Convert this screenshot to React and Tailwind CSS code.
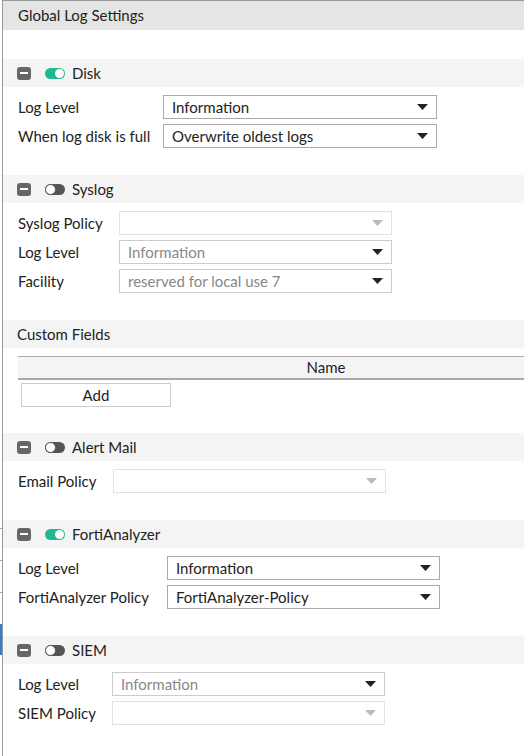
import React from "react";

const Arrow = ({ color }) => (
  <svg width="11" height="6" viewBox="0 0 11 6" className="shrink-0">
    <path d="M0 0H11L5.5 6Z" fill={color} />
  </svg>
);

const Select = ({ value, width = "w-[273px]", state = "on" }) => {
  const border =
    state === "on" ? "border-[#aaa]" : state === "dim" ? "border-[#ccc]" : "border-[#e2e2e2]";
  const text = state === "on" ? "text-[#222]" : "text-[#888]";
  const arrow = state === "off" ? "#bbb" : "#222";
  return (
    <div
      className={`${width} h-[24px] border ${border} bg-white flex items-center justify-between pl-[8px] pr-[8px]`}
    >
      <span className={`text-[15px] ${text} truncate`}>{value}</span>
      <Arrow color={arrow} />
    </div>
  );
};

const Minus = () => (
  <div className="w-[14px] h-[13px] rounded-[3px] bg-[#666] flex items-center justify-center">
    <div className="w-[8px] h-[2px] bg-white" />
  </div>
);

const Toggle = ({ on }) =>
  on ? (
    <div className="w-[20px] h-[11px] rounded-full bg-[#1fb892] flex items-center justify-end pr-[1px]">
      <div className="w-[9px] h-[9px] rounded-full bg-white" />
    </div>
  ) : (
    <div className="w-[20px] h-[11px] rounded-full bg-[#555] flex items-center justify-start">
      <div className="w-[11px] h-[11px] rounded-full bg-white border-[1.5px] border-[#555]" />
    </div>
  );

const SectionHead = ({ title, toggle }) => (
  <div className="h-[28px] bg-[#f4f4f4] flex items-center pl-[14px]">
    {toggle !== undefined ? (
      <>
        <Minus />
        <div className="ml-[14px]">
          <Toggle on={toggle} />
        </div>
        <span className="ml-[7px] text-[15px] text-[#222]">{title}</span>
      </>
    ) : (
      <span className="text-[15px] text-[#222]">{title}</span>
    )}
  </div>
);

const Row = ({ label, labelW, children }) => (
  <div className="flex items-center h-[24px]">
    <div className={`${labelW} shrink-0 text-[15px] text-[#222]`}>{label}</div>
    {children}
  </div>
);

const Section = ({ title, toggle, children }) => (
  <div>
    <SectionHead title={title} toggle={toggle} />
    <div className="pl-[15px] pt-[8px] pb-[27px] flex flex-col gap-[5px]">{children}</div>
  </div>
);

export default function App() {
  return (
    <div
      className="w-[524px] h-[756px] bg-white flex overflow-hidden"
      style={{ fontFamily: "Lato, 'Open Sans', sans-serif" }}
    >
      {/* left gutter of the page behind */}
      <div className="w-[2px] shrink-0 flex flex-col">
        <div className="h-[528px]" />
        <div className="h-px bg-[#aaa]" />
        <div className="h-[31px]" />
        <div className="h-px bg-[#aaa]" />
        <div className="h-[31px]" />
        <div className="h-px bg-[#aaa]" />
        <div className="h-[31px]" />
        <div className="h-[31px] bg-[#2f7fd1]" />
      </div>
      <div className="flex-1 border-l border-t border-[#999] min-w-0">
        <div className="h-[29px] bg-[#e5e5e5] flex items-center pl-[15px] text-[15px] text-[#222]">
          Global Log Settings
        </div>
        <div className="h-[29px]" />

        <Section title="Disk" toggle={true}>
          <Row label="Log Level" labelW="w-[145px]">
            <Select value="Information" width="w-[274px]" />
          </Row>
          <Row label="When log disk is full" labelW="w-[145px]">
            <Select value="Overwrite oldest logs" width="w-[274px]" />
          </Row>
        </Section>

        <Section title="Syslog" toggle={false}>
          <Row label="Syslog Policy" labelW="w-[101px]">
            <Select value="" state="off" />
          </Row>
          <Row label="Log Level" labelW="w-[101px]">
            <Select value="Information" state="dim" />
          </Row>
          <Row label="Facility" labelW="w-[101px]">
            <Select value="reserved for local use 7" state="dim" />
          </Row>
        </Section>

        <div>
          <SectionHead title="Custom Fields" />
          <div className="pl-[15px] pt-[8px] pb-[26px]">
            <div className="w-[616px] h-[24px] bg-[#f4f4f4] border-t border-b-2 border-[#aaa] flex items-center justify-center text-[15px] text-[#222]">
              Name
            </div>
            <div className="ml-[3px] mt-[3px] w-[150px] h-[24px] border border-[#ccc] flex items-center justify-center text-[15px] text-[#222]">
              Add
            </div>
          </div>
        </div>

        <Section title="Alert Mail" toggle={false}>
          <Row label="Email Policy" labelW="w-[95px]">
            <Select value="" state="off" />
          </Row>
        </Section>

        <Section title="FortiAnalyzer" toggle={true}>
          <Row label="Log Level" labelW="w-[149px]">
            <Select value="Information" />
          </Row>
          <Row label="FortiAnalyzer Policy" labelW="w-[149px]">
            <Select value="FortiAnalyzer-Policy" />
          </Row>
        </Section>

        <Section title="SIEM" toggle={false}>
          <Row label="Log Level" labelW="w-[94px]">
            <Select value="Information" state="dim" />
          </Row>
          <Row label="SIEM Policy" labelW="w-[94px]">
            <Select value="" state="off" />
          </Row>
        </Section>
      </div>
    </div>
  );
}
